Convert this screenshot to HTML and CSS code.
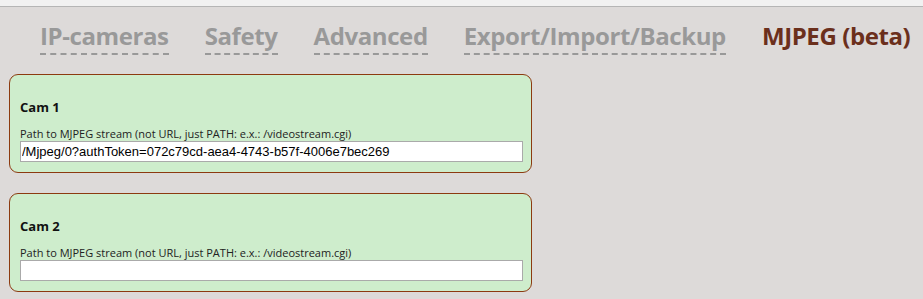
FILE: index.html
```html
<!DOCTYPE html>
<html lang="en">
<head>
  <meta charset="UTF-8">
  <title>MJPEG settings</title>
  <link rel="stylesheet" href="styles.css">
</head>
<body>
  <div class="topbar"></div>
  <nav class="tabs">
    <a class="tab" href="#">IP-cameras</a>
    <a class="tab" href="#">Safety</a>
    <a class="tab" href="#">Advanced</a>
    <a class="tab" href="#">Export/Import/Backup</a>
    <span class="tab active">MJPEG (beta)</span>
  </nav>

  <div class="panels">
    <div class="cam">
      <h4>Cam 1</h4>
      <label for="cam1">Path to MJPEG stream (not URL, just PATH: e.x.: /videostream.cgi)</label>
      <input type="text" id="cam1" value="/Mjpeg/0?authToken=072c79cd-aea4-4743-b57f-4006e7bec269">
    </div>

    <div class="cam">
      <h4>Cam 2</h4>
      <label for="cam2">Path to MJPEG stream (not URL, just PATH: e.x.: /videostream.cgi)</label>
      <input type="text" id="cam2" value="">
    </div>
  </div>
</body>
</html>
```

FILE: styles.css
```css
body {
  margin: 0;
  background-color: #dddad9;
  font-family: "Open Sans", "Noto Sans", sans-serif;
  color: #111;
}

.topbar {
  height: 6px;
  background-color: #f1f1f1;
  border-bottom: 1px solid #b5b5b5;
}

.tabs {
  display: flex;
  gap: 36px;
  padding: 14px 0 0 40px;
  height: 45px;
}

.tab {
  font-size: 24px;
  font-weight: bold;
  color: #999;
  text-decoration: none;
  border-bottom: 2px dashed #999;
  line-height: 30px;
  height: 32px;
  letter-spacing: -0.4px;
}

.tab.active {
  color: #6b2f1c;
  border-bottom: none;
}

.panels {
  padding: 8px 0 0 9px;
  display: flex;
  flex-direction: column;
  gap: 20px;
}

.cam {
  width: 503px;
  background-color: #ceedcc;
  border: 1px solid #8c3a10;
  border-radius: 9px;
  padding: 24px 8px 10px 10px;
  display: flex;
  flex-direction: column;
}

.cam h4 {
  margin: 0 0 12px 0;
  font-size: 13px;
  line-height: 16px;
}

.cam label {
  font-size: 11px;
  line-height: 14px;
  color: #222;
}

.cam input {
  height: 17px;
  padding: 1px 1px;
  border: 1px solid #aaa;
  font-family: "Liberation Sans", Arial, sans-serif;
  font-size: 13px;
  color: #000;
  background-color: #fff;
}
```
